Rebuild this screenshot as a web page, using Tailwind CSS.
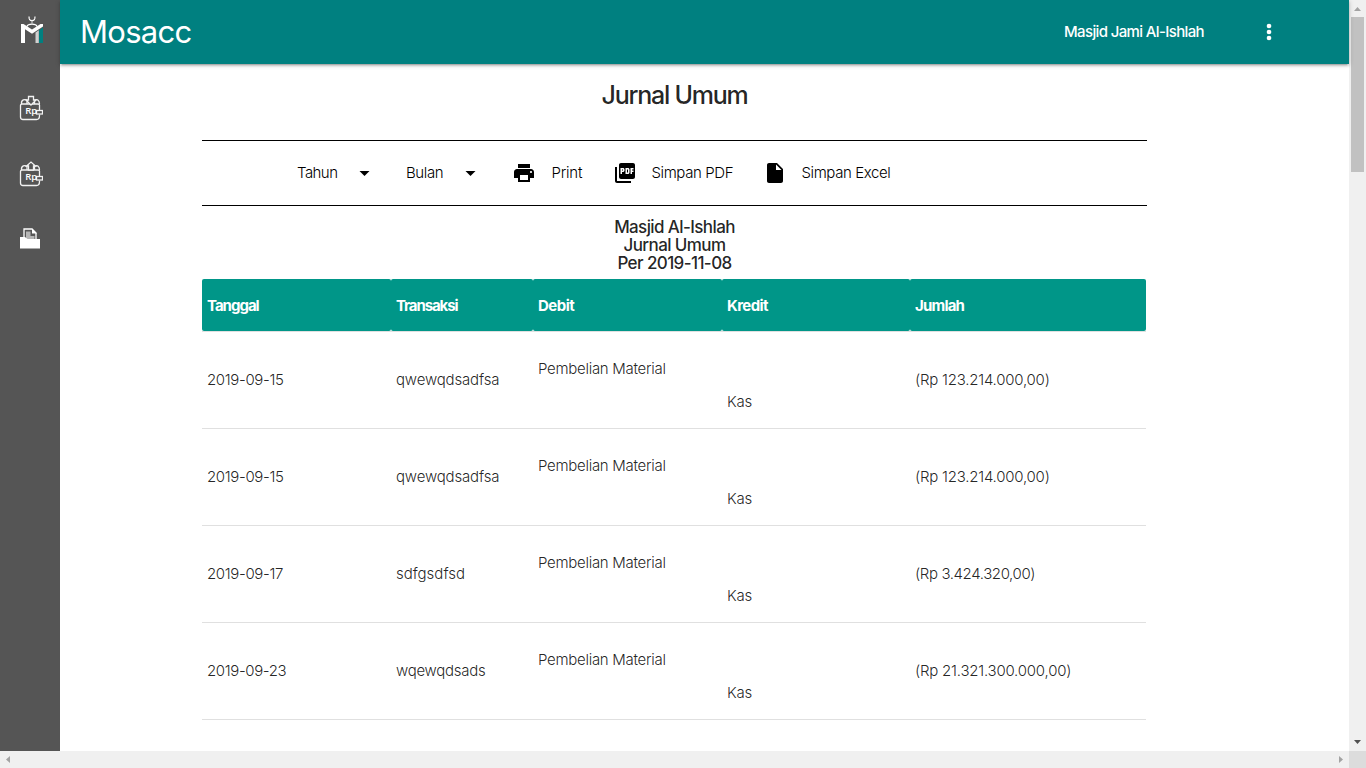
<!DOCTYPE html>
<html lang="id">
<head>
<meta charset="utf-8">
<title>Mosacc</title>
<script src="https://cdn.jsdelivr.net/npm/@tailwindcss/browser@4"></script>
</head>
<body class="h-[768px] w-[1366px] overflow-hidden bg-white font-['Inter',sans-serif] text-[15px] font-light text-black/87">
<div class="grid h-full grid-cols-[60px_1289px_17px] grid-rows-[751px_17px]">
  <aside class="flex flex-col items-center bg-[#555555] pl-0.5 text-white">
    <svg class="mt-4 h-7 w-6 shrink-0" viewBox="0 0 24 28" fill="none">
      <path d="M10.200 .500 C8.500 6 17.500 6 15.800 .500" stroke="#fff" stroke-width="1.200"/>
      <path d="M13 4.500v3" stroke="#ddd" stroke-width="1"/>
      <path d="M8 10.500 C9 7.300 17 7.300 18 10.500" stroke="#fff" stroke-width="1.300"/>
      <path d="M2 8h2.500l8.500 5.600L21.500 8H24v2.500l-11 7.300L6 13.200V27H2z" fill="#fff"/>
      <path d="M16.500 16.500l3.300-2.200V27h-3.300z" fill="#d0d0d0"/>
      <path d="M20 14.200l4-2.700V27h-4z" fill="#008080"/>
    </svg>
    <svg class="mt-[51px] h-[26px] w-6 shrink-0" viewBox="0 0 24 26" fill="none" stroke="#f2f2f2" stroke-width="1.300">
      <path d="M20.500 15v-5q0-1-1.500-1H3Q1.500 9 1.500 10.500V22q0 2.500 2.500 2.500h13.500q3 0 3-4v-1M2.500 8.500C2 5 6 3.500 8 5.500v3M15.500 8.500V5.500c3-2 5 0 5 3.500"/>
      <path d="M9.500 1.500h5V5H17l-5 5-5-5h2.500z" fill="#555"/>
      <rect x="17.500" y="15.500" width="6" height="3.500" fill="#555"/>
      <text x="6.200" y="19.300" font-family="Open Sans, sans-serif" font-size="9.500" font-weight="600" fill="#fff" stroke="none">Rp</text>
    </svg>
    <svg class="mt-10 h-[26px] w-6 shrink-0" viewBox="0 0 24 26" fill="none" stroke="#f2f2f2" stroke-width="1.300">
      <path d="M20.500 15v-5q0-1-1.500-1H3Q1.500 9 1.500 10.500V22q0 2.500 2.500 2.500h13.500q3 0 3-4v-1M2.500 8.500C2 5 6 3.500 8 5.500v3M15.500 8.500V5.500c3-2 5 0 5 3.500"/>
      <path d="M9.500 9V5H7.500L12 1l4.500 4H14.500v4z" fill="#555"/>
      <rect x="17.500" y="15.500" width="6" height="3.500" fill="#555"/>
      <text x="6.200" y="19.300" font-family="Open Sans, sans-serif" font-size="9.500" font-weight="600" fill="#fff" stroke="none">Rp</text>
    </svg>
    <svg class="mt-[41px] mr-0.5 h-[21px] w-5 shrink-0" viewBox="0 0 20 21">
      <path d="M4 12V1h8l4 4v7" fill="#555" stroke="#fff" stroke-width="1.300"/>
      <path d="M12 .500l5 5h-5z" fill="#fff"/>
      <path d="M6 3.500h4.500v4.500h4V11H6z" fill="#b5b5b5"/>
      <path d="M0 9h5l2.500 2H20v9.500H0z" fill="#fff"/>
    </svg>
  </aside>

  <div class="flex min-w-0 flex-col">
    <header class="z-10 flex h-16 shrink-0 items-center bg-[#008080] pl-5 text-white shadow-[0_2px_2px_0_rgba(0,0,0,0.14),0_3px_1px_-2px_rgba(0,0,0,0.12),0_1px_5px_0_rgba(0,0,0,0.2)]">
      <div class="w-[984px] whitespace-nowrap text-[31px] font-normal tracking-[-0.7px]">Mosacc</div>
      <div class="w-[193px] whitespace-nowrap pt-px text-[15px] font-medium tracking-[-0.63px]">Masjid Jami Al-Ishlah</div>
      <svg class="h-6 w-6" viewBox="0 0 24 24" fill="currentColor"><circle cx="12" cy="6" r="2.300"/><circle cx="12" cy="12" r="2.300"/><circle cx="12" cy="18" r="2.300"/></svg>
    </header>

    <main class="ml-[142px] w-[945px]">
      <h1 class="flex h-[76px] items-start justify-center pt-[13px] text-[25px] leading-9 font-medium tracking-[-1.25px]">Jurnal Umum</h1>
      <nav class="flex h-[66px] items-center border-y border-black pl-[95px] tracking-[-0.4px] whitespace-nowrap text-black">
        <span class="w-[60px] tracking-[-0.55px]">Tahun</span>
        <svg class="mr-[34px] h-[5px] w-[15px]" viewBox="0 0 15 5"><path d="M2.500 0h10l-5 5z"/></svg>
        <span class="w-[57px]">Bulan</span>
        <svg class="mr-[34px] h-[5px] w-[15px]" viewBox="0 0 15 5"><path d="M2.500 0h10l-5 5z"/></svg>
        <svg class="mr-[15.500px] h-6 w-6" viewBox="0 0 24 24"><path d="M19 8H5c-1.660 0-3 1.340-3 3v6h4v4h12v-4h4v-6c0-1.660-1.340-3-3-3zm-3 11H8v-5h8v5zm3-7c-.550 0-1-.450-1-1s.450-1 1-1 1 .450 1 1-.450 1-1 1zm-1-9H6v4h12V3z"/></svg>
        <span class="w-[61px] tracking-[-0.2px]">Print</span>
        <svg class="mr-[15px] h-6 w-6" viewBox="0 0 24 24"><path d="M20 2H8c-1.100 0-2 .900-2 2v12c0 1.100.900 2 2 2h12c1.100 0 2-.900 2-2V4c0-1.100-.900-2-2-2zm-8.500 7.500c0 .830-.670 1.500-1.500 1.500H9v2H7.500V7H10c.830 0 1.500.670 1.500 1.500v1zm5 2c0 .830-.670 1.500-1.500 1.500h-2.500V7H15c.830 0 1.500.670 1.500 1.500v3zm4-3H19v1h1.500V11H19v2h-1.500V7h3v1.500zM9 9.500h1v-1H9v1zM4 6H2v14c0 1.100.900 2 2 2h14v-2H4V6zm10 5.500h1v-3h-1v3z"/></svg>
        <span class="w-[111px]">Simpan PDF</span>
        <svg class="mr-[15px] h-6 w-6" viewBox="0 0 24 24"><path d="M6 2c-1.100 0-1.990.900-1.990 2L4 20c0 1.100.890 2 1.990 2H18c1.100 0 2-.900 2-2V8l-6-6H6zm7 7V3.500L18.500 9H13z"/></svg>
        <span>Simpan Excel</span>
      </nav>
      <div class="flex h-[73px] flex-col items-center pt-3 text-[17px] leading-[18px] font-medium tracking-[-0.6px]">
        <span>Masjid Al-Ishlah</span><span>Jurnal Umum</span><span>Per 2019-11-08</span>
      </div>
      <table class="w-[944px] table-fixed border-collapse text-left tracking-[-0.28px] whitespace-nowrap">
        <colgroup><col class="w-[189px]"><col class="w-[142px]"><col class="w-[189px]"><col class="w-[188px]"><col class="w-[236px]"></colgroup>
        <thead class="border-b border-[#e0e0e0] text-[15px] font-bold text-white">
          <tr class="h-[52px]">
            <th class="rounded-[2px] bg-[#009688] px-[5px] pt-0.5 tracking-[-1px]">Tanggal</th><th class="rounded-[2px] bg-[#009688] px-[5px] pt-0.5 tracking-[-1.1px]">Transaksi</th><th class="rounded-[2px] bg-[#009688] px-[5px] pt-0.5 tracking-[-0.5px]">Debit</th><th class="rounded-[2px] bg-[#009688] px-[5px] pt-0.5 tracking-[-0.6px]">Kredit</th><th class="rounded-[2px] bg-[#009688] px-[5px] pt-0.5 tracking-[-0.8px]">Jumlah</th>
          </tr>
        </thead>
        <tbody>
          <tr class="h-[97px] border-b border-[#e0e0e0]"><td class="px-[5px] pt-0.5 tracking-[-0.36px]">2019-09-15</td><td class="px-[5px] pt-0.5 tracking-[-0.16px]">qwewqdsadfsa</td><td class="px-[5px] pb-5">Pembelian Material</td><td class="px-[5px] pt-[46px]">Kas</td><td class="px-[5px] pt-0.5 tracking-[-0.23px]">(Rp 123.214.000,00)</td></tr>
          <tr class="h-[97px] border-b border-[#e0e0e0]"><td class="px-[5px] pt-0.5 tracking-[-0.36px]">2019-09-15</td><td class="px-[5px] pt-0.5 tracking-[-0.16px]">qwewqdsadfsa</td><td class="px-[5px] pb-5">Pembelian Material</td><td class="px-[5px] pt-[46px]">Kas</td><td class="px-[5px] pt-0.5 tracking-[-0.23px]">(Rp 123.214.000,00)</td></tr>
          <tr class="h-[97px] border-b border-[#e0e0e0]"><td class="px-[5px] pt-0.5 tracking-[-0.36px]">2019-09-17</td><td class="px-[5px] pt-0.5 tracking-[0px]">sdfgsdfsd</td><td class="px-[5px] pb-5">Pembelian Material</td><td class="px-[5px] pt-[46px]">Kas</td><td class="px-[5px] pt-0.5 tracking-[-0.4px]">(Rp 3.424.320,00)</td></tr>
          <tr class="h-[97px] border-b border-[#e0e0e0]"><td class="px-[5px] pt-0.5 tracking-[-0.38px]">2019-09-23</td><td class="px-[5px] pt-0.5">wqewqdsads</td><td class="px-[5px] pb-5">Pembelian Material</td><td class="px-[5px] pt-[46px]">Kas</td><td class="px-[5px] pt-0.5 tracking-[-0.22px]">(Rp 21.321.300.000,00)</td></tr>
        </tbody>
      </table>
    </main>
  </div>

  <div class="flex flex-col items-center bg-[#f0f0f0]">
    <svg class="h-[17px] w-[17px] shrink-0" viewBox="0 0 17 17"><path d="M5 11l3.500-4 3.500 4z" fill="#a3a3a3"/></svg>
    <div class="h-[155px] w-[13px] bg-[#c1c1c1]"></div>
    <svg class="mt-auto h-[17px] w-[17px] shrink-0" viewBox="0 0 17 17"><path d="M5 6l3.500 4L12 6z" fill="#505050"/></svg>
  </div>
  <div class="col-span-2 flex justify-between bg-[#f0f0f0]">
    <svg class="h-[17px] w-[17px]" viewBox="0 0 17 17"><path d="M10 5L6 8.500l4 3.500z" fill="#a3a3a3"/></svg>
    <svg class="h-[17px] w-[17px]" viewBox="0 0 17 17"><path d="M7 5l4 3.500L7 12z" fill="#a3a3a3"/></svg>
  </div>
  <div class="bg-[#dcdcdc]"></div>
</div>
</body>
</html>
